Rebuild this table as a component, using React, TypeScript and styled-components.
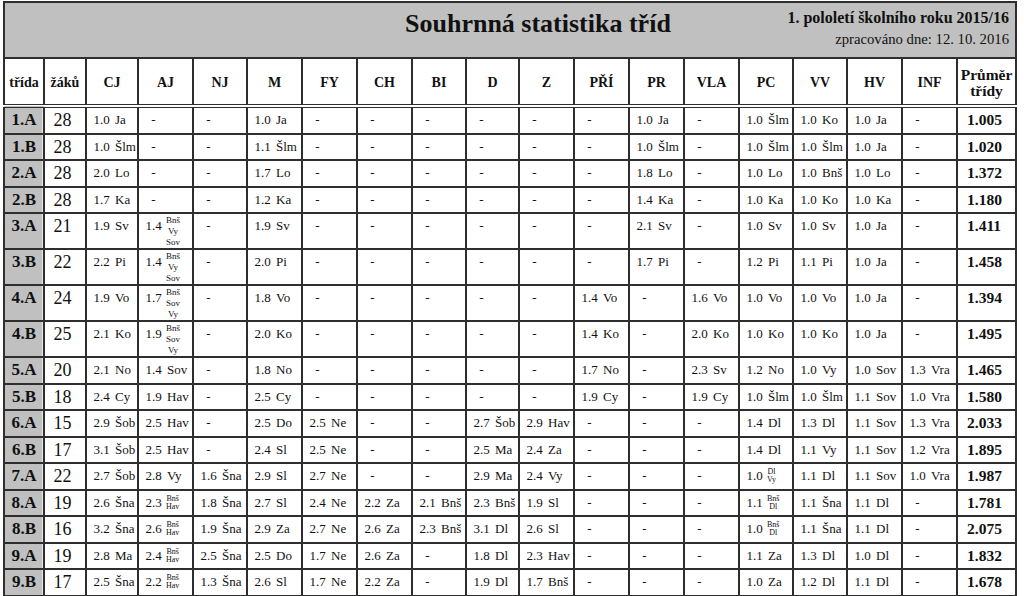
import React from 'react';
import styled, { createGlobalStyle } from 'styled-components';

const GlobalStyle = createGlobalStyle`
  html, body {
    margin: 0;
    padding: 0;
    background: #fff;
  }
  body {
    font-family: 'Liberation Serif', 'Times New Roman', serif;
    color: #111;
  }
`;

const LINE = '#2e2e2e';

const Page = styled.div`
  padding: 1px 0 0 3px;
`;

const Sheet = styled.table`
  border-collapse: collapse;
  table-layout: fixed;
  width: 1014px;
`;

const Col = styled.col<{ $w: number }>`
  width: ${({ $w }) => $w}px;
`;

const BannerCell = styled.th`
  padding: 0;
  border: 2px solid ${LINE};
  background: #c0c0c0;
`;

const Banner = styled.div`
  display: flex;
  height: 54px;
`;

const Title = styled.h1`
  margin: 0;
  padding: 8px 0 0 400px;
  font: bold 26px/26px 'Liberation Serif', serif;
  color: #111;
`;

const Period = styled.div`
  margin-left: auto;
  padding: 7px 6px 0 0;
  text-align: right;
`;

const Semester = styled.div`
  font: bold 16px/16px 'Liberation Serif', serif;
`;

const Processed = styled.div`
  margin-top: 3px;
  font: normal 14.7px/20px 'Liberation Serif', serif;
`;

const HeadCell = styled.th`
  padding: 0;
  border: 2px solid ${LINE};
  border-bottom: 4px double ${LINE};
  background: #fff;
`;

const HeadLabel = styled.div<{ $big?: boolean }>`
  height: 43px;
  display: flex;
  align-items: center;
  justify-content: center;
  text-align: center;
  font: bold ${({ $big }) => ($big ? '15.5px' : '14px')} / 16px 'Liberation Serif', serif;
  padding-top: 2px;
`;

const Cell = styled.td<{ $gray?: boolean }>`
  padding: 0;
  vertical-align: top;
  border: 2px solid ${LINE};
  background: ${({ $gray }) => ($gray ? '#c0c0c0' : '#fff')};
  box-shadow: ${({ $gray }) => ($gray ? 'inset -1px 0 0 #e4e4e4' : 'none')};
`;

const ClassLabel = styled.div<{ $tall: boolean }>`
  height: ${({ $tall }) => ($tall ? 34 : 24.5)}px;
  line-height: 24px;
  text-align: center;
  font-size: 17px;
  font-weight: bold;
`;

const Count = styled.div<{ $tall: boolean }>`
  height: ${({ $tall }) => ($tall ? 34 : 24.5)}px;
  line-height: 24px;
  text-align: center;
  padding-right: 5px;
  font-size: 18px;
`;

const Average = styled.div<{ $tall: boolean }>`
  height: ${({ $tall }) => ($tall ? 34 : 24.5)}px;
  line-height: 24px;
  padding-left: 9px;
  font-size: 15.5px;
  font-weight: bold;
`;

const Mark = styled.div<{ $tall: boolean }>`
  display: flex;
  align-items: flex-start;
  height: ${({ $tall }) => ($tall ? 34 : 24.5)}px;
  padding-left: 5px;
  font-size: 13px;
  white-space: nowrap;
  overflow: hidden;
`;

const Grade = styled.span`
  flex: none;
  width: 19px;
  text-align: center;
  line-height: 24px;
`;

const Teacher = styled.span`
  margin-left: 4px;
  line-height: 24px;
`;

const Stack = styled.span<{ $lines: number }>`
  display: flex;
  flex-direction: column;
  align-items: center;
  margin-left: 3px;
  padding-top: ${({ $lines }) => ($lines > 2 ? 1 : 4)}px;
  font-size: ${({ $lines }) => ($lines > 2 ? 9 : 8)}px;
  line-height: ${({ $lines }) => ($lines > 2 ? 11 : 8)}px;
`;

const widths = [40, 42, 52, 55, 54, 55, 55, 55, 54, 53, 55, 55, 55, 55, 54, 54, 55, 55, 59];

const subjects = ['CJ', 'AJ', 'NJ', 'M', 'FY', 'CH', 'BI', 'D', 'Z', 'PŘÍ', 'PR', 'VLA', 'PC', 'VV', 'HV', 'INF'];

type Row = { cls: string; count: number; marks: string[]; avg: string; tall?: boolean };

const rows: Row[] = [
  { cls: '1.A', count: 28, avg: '1.005', marks: ['1.0 Ja', '-', '-', '1.0 Ja', '-', '-', '-', '-', '-', '-', '1.0 Ja', '-', '1.0 Šlm', '1.0 Ko', '1.0 Ja', '-'] },
  { cls: '1.B', count: 28, avg: '1.020', marks: ['1.0 Šlm', '-', '-', '1.1 Šlm', '-', '-', '-', '-', '-', '-', '1.0 Šlm', '-', '1.0 Šlm', '1.0 Šlm', '1.0 Ja', '-'] },
  { cls: '2.A', count: 28, avg: '1.372', marks: ['2.0 Lo', '-', '-', '1.7 Lo', '-', '-', '-', '-', '-', '-', '1.8 Lo', '-', '1.0 Lo', '1.0 Bnš', '1.0 Lo', '-'] },
  { cls: '2.B', count: 28, avg: '1.180', marks: ['1.7 Ka', '-', '-', '1.2 Ka', '-', '-', '-', '-', '-', '-', '1.4 Ka', '-', '1.0 Ka', '1.0 Ko', '1.0 Ka', '-'] },
  { cls: '3.A', count: 21, avg: '1.411', tall: true, marks: ['1.9 Sv', '1.4 Bnš/Vy/Sov', '-', '1.9 Sv', '-', '-', '-', '-', '-', '-', '2.1 Sv', '-', '1.0 Sv', '1.0 Sv', '1.0 Ja', '-'] },
  { cls: '3.B', count: 22, avg: '1.458', tall: true, marks: ['2.2 Pi', '1.4 Bnš/Vy/Sov', '-', '2.0 Pi', '-', '-', '-', '-', '-', '-', '1.7 Pi', '-', '1.2 Pi', '1.1 Pi', '1.0 Ja', '-'] },
  { cls: '4.A', count: 24, avg: '1.394', tall: true, marks: ['1.9 Vo', '1.7 Bnš/Sov/Vy', '-', '1.8 Vo', '-', '-', '-', '-', '-', '1.4 Vo', '-', '1.6 Vo', '1.0 Vo', '1.0 Vo', '1.0 Ja', '-'] },
  { cls: '4.B', count: 25, avg: '1.495', tall: true, marks: ['2.1 Ko', '1.9 Bnš/Sov/Vy', '-', '2.0 Ko', '-', '-', '-', '-', '-', '1.4 Ko', '-', '2.0 Ko', '1.0 Ko', '1.0 Ko', '1.0 Ja', '-'] },
  { cls: '5.A', count: 20, avg: '1.465', marks: ['2.1 No', '1.4 Sov', '-', '1.8 No', '-', '-', '-', '-', '-', '1.7 No', '-', '2.3 Sv', '1.2 No', '1.0 Vy', '1.0 Sov', '1.3 Vra'] },
  { cls: '5.B', count: 18, avg: '1.580', marks: ['2.4 Cy', '1.9 Hav', '-', '2.5 Cy', '-', '-', '-', '-', '-', '1.9 Cy', '-', '1.9 Cy', '1.0 Šlm', '1.0 Šlm', '1.1 Sov', '1.0 Vra'] },
  { cls: '6.A', count: 15, avg: '2.033', marks: ['2.9 Šob', '2.5 Hav', '-', '2.5 Do', '2.5 Ne', '-', '-', '2.7 Šob', '2.9 Hav', '-', '-', '-', '1.4 Dl', '1.3 Dl', '1.1 Sov', '1.3 Vra'] },
  { cls: '6.B', count: 17, avg: '1.895', marks: ['3.1 Šob', '2.5 Hav', '-', '2.4 Sl', '2.5 Ne', '-', '-', '2.5 Ma', '2.4 Za', '-', '-', '-', '1.4 Dl', '1.1 Vy', '1.1 Sov', '1.2 Vra'] },
  { cls: '7.A', count: 22, avg: '1.987', marks: ['2.7 Šob', '2.8 Vy', '1.6 Šna', '2.9 Sl', '2.7 Ne', '-', '-', '2.9 Ma', '2.4 Vy', '-', '-', '-', '1.0 Dl/Vy', '1.1 Dl', '1.1 Sov', '1.0 Vra'] },
  { cls: '8.A', count: 19, avg: '1.781', marks: ['2.6 Šna', '2.3 Bnš/Hav', '1.8 Šna', '2.7 Sl', '2.4 Ne', '2.2 Za', '2.1 Bnš', '2.3 Bnš', '1.9 Sl', '-', '-', '-', '1.1 Bnš/Dl', '1.1 Šna', '1.1 Dl', '-'] },
  { cls: '8.B', count: 16, avg: '2.075', marks: ['3.2 Šna', '2.6 Bnš/Hav', '1.9 Šna', '2.9 Za', '2.7 Ne', '2.6 Za', '2.3 Bnš', '3.1 Dl', '2.6 Sl', '-', '-', '-', '1.0 Bnš/Dl', '1.1 Šna', '1.1 Dl', '-'] },
  { cls: '9.A', count: 19, avg: '1.832', marks: ['2.8 Ma', '2.4 Bnš/Hav', '2.5 Šna', '2.5 Do', '1.7 Ne', '2.6 Za', '-', '1.8 Dl', '2.3 Hav', '-', '-', '-', '1.1 Za', '1.3 Dl', '1.0 Dl', '-'] },
  { cls: '9.B', count: 17, avg: '1.678', marks: ['2.5 Šna', '2.2 Bnš/Hav', '1.3 Šna', '2.6 Sl', '1.7 Ne', '2.2 Za', '-', '1.9 Dl', '1.7 Bnš', '-', '-', '-', '1.0 Za', '1.2 Dl', '1.1 Dl', '-'] },
];

function MarkCell({ value, tall }: { value: string; tall: boolean }) {
  if (value === '-') {
    return (
      <Cell>
        <Mark $tall={tall}>
          <Grade>-</Grade>
        </Mark>
      </Cell>
    );
  }
  const [grade, who] = value.split(' ');
  const names = who.split('/');
  return (
    <Cell>
      <Mark $tall={tall}>
        <Grade>{grade}</Grade>
        {names.length > 1 ? (
          <Stack $lines={names.length}>
            {names.map((n) => (
              <span key={n}>{n}</span>
            ))}
          </Stack>
        ) : (
          <Teacher>{who}</Teacher>
        )}
      </Mark>
    </Cell>
  );
}

export default function App() {
  return (
    <>
      <GlobalStyle />
      <Page>
        <Sheet>
          <colgroup>
            {widths.map((w, i) => (
              <Col key={i} $w={w} />
            ))}
          </colgroup>
          <thead>
            <tr>
              <BannerCell colSpan={19}>
                <Banner>
                  <Title>Souhrnná statistika tříd</Title>
                  <Period>
                    <Semester>1. pololetí školního roku 2015/16</Semester>
                    <Processed>zpracováno dne: 12. 10. 2016</Processed>
                  </Period>
                </Banner>
              </BannerCell>
            </tr>
            <tr>
              <HeadCell>
                <HeadLabel>třída</HeadLabel>
              </HeadCell>
              <HeadCell>
                <HeadLabel>žáků</HeadLabel>
              </HeadCell>
              {subjects.map((s) => (
                <HeadCell key={s}>
                  <HeadLabel>{s}</HeadLabel>
                </HeadCell>
              ))}
              <HeadCell>
                <HeadLabel $big>
                  Průměr
                  <br />
                  třídy
                </HeadLabel>
              </HeadCell>
            </tr>
          </thead>
          <tbody>
            {rows.map((r) => {
              const tall = !!r.tall;
              return (
                <tr key={r.cls}>
                  <Cell $gray>
                    <ClassLabel $tall={tall}>{r.cls}</ClassLabel>
                  </Cell>
                  <Cell>
                    <Count $tall={tall}>{r.count}</Count>
                  </Cell>
                  {r.marks.map((m, i) => (
                    <MarkCell key={i} value={m} tall={tall} />
                  ))}
                  <Cell>
                    <Average $tall={tall}>{r.avg}</Average>
                  </Cell>
                </tr>
              );
            })}
          </tbody>
        </Sheet>
      </Page>
    </>
  );
}
